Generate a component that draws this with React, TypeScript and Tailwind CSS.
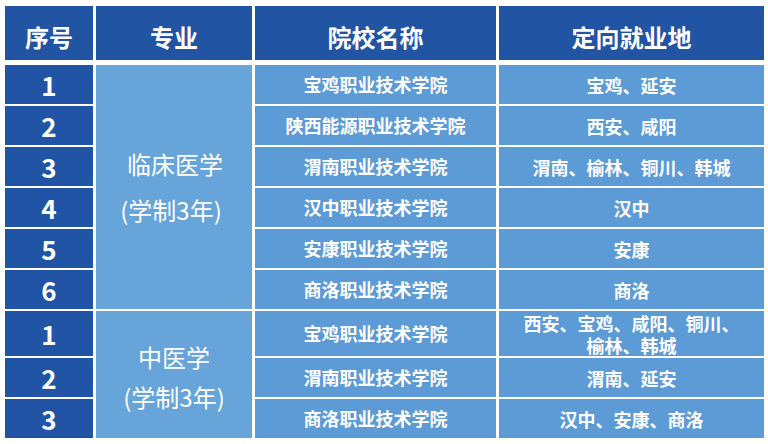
import React from 'react';

const rows1 = [
  { no: '1', school: '宝鸡职业技术学院', place: '宝鸡、延安' },
  { no: '2', school: '陕西能源职业技术学院', place: '西安、咸阳' },
  { no: '3', school: '渭南职业技术学院', place: '渭南、榆林、铜川、韩城' },
  { no: '4', school: '汉中职业技术学院', place: '汉中' },
  { no: '5', school: '安康职业技术学院', place: '安康' },
  { no: '6', school: '商洛职业技术学院', place: '商洛' },
];

const rows2 = [
  { no: '1', school: '宝鸡职业技术学院', place: '西安、宝鸡、咸阳、铜川、\n榆林、韩城' },
  { no: '2', school: '渭南职业技术学院', place: '渭南、延安' },
  { no: '3', school: '商洛职业技术学院', place: '汉中、安康、商洛' },
];

const font = { fontFamily: '"Noto Sans CJK SC", "Noto Sans", sans-serif' };

const App: React.FC = () => {
  const allRows = [...rows1, ...rows2];
  return (
    <div className="w-[768px] h-[444px] bg-white pt-[6px] pl-[5px]" style={font}>
      <div className="grid grid-cols-[88px_156px_241px_265px] gap-x-[3px] gap-y-[2px] grid-rows-[57px_39px_39px_39px_39px_39px_39px_45px_39px_39px] text-white">
        {/* header */}
        {['序号', '专业', '院校名称', '定向就业地'].map((h) => (
          <div
            key={h}
            className="bg-[#2254a4] h-[54px] self-start flex items-center justify-center pt-[8px] text-[24px] font-bold"
          >
            {h}
          </div>
        ))}

        {allRows.map((r, i) => (
          <React.Fragment key={i}>
            <div
              className="bg-[#2254a5] flex items-center justify-center text-[26px] font-bold"
              style={{ gridColumn: 1, gridRow: i + 2 }}
            >
              {r.no}
            </div>
            <div
              className="bg-[#5d9bd6] flex items-center justify-center text-[18px] font-semibold"
              style={{ gridColumn: 3, gridRow: i + 2 }}
            >
              {r.school}
            </div>
            <div
              className="bg-[#5d9bd6] flex items-center justify-center text-center text-[18px] font-semibold leading-[22px] whitespace-pre-line"
              style={{ gridColumn: 4, gridRow: i + 2 }}
            >
              {r.place}
            </div>
          </React.Fragment>
        ))}

        <div className="col-start-2 row-start-2 row-span-6 bg-[#66a4da] flex flex-col items-center justify-center gap-[12px] text-[24px] leading-[34px]">
          <div className="pl-[2px]">临床医学</div>
          <div className="pr-[6px]">(学制3年)</div>
        </div>
        <div className="col-start-2 row-start-8 row-span-3 bg-[#66a4da] flex flex-col items-center justify-center gap-[6px] text-[24px] leading-[34px] pt-[4px]">
          <div>中医学</div>
          <div>(学制3年)</div>
        </div>
      </div>
    </div>
  );
};

export default App;
